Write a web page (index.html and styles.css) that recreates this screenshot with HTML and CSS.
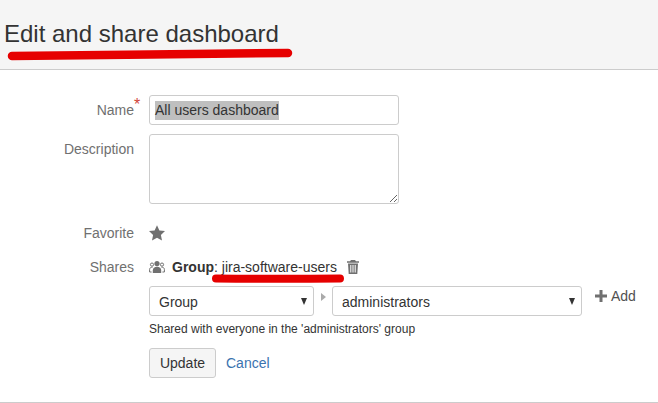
FILE: index.html
```html
<!DOCTYPE html>
<html lang="en">
<head>
<meta charset="utf-8">
<title>Edit and share dashboard</title>
<link rel="stylesheet" href="styles.css">
</head>
<body>
<header class="page-header"><h1>Edit and share dashboard</h1></header>
<form class="form">
  <div class="row row-name">
    <span class="label">Name<sup class="req">*</sup></span>
    <div class="input"><span class="selected">All users dashboard</span></div>
  </div>
  <div class="row row-desc">
    <label class="label" for="desc">Description</label>
    <textarea class="textarea" id="desc"></textarea>
  </div>
  <div class="row row-fav">
    <span class="label">Favorite</span>
    <svg class="star" viewBox="0 0 16 16" width="16" height="16"><path d="M8 .3l2.4 5.1 5.6.7-4.1 3.8 1.1 5.5L8 12.7l-5 2.7 1.1-5.5L0 6.1l5.6-.7z"/></svg>
  </div>
  <div class="row row-shares">
    <span class="label">Shares</span>
    <div class="shares">
      <div class="share-line">
        <svg class="group-icon" viewBox="0 0 16 14" width="16" height="14"><circle cx="8" cy="3.6" r="2.6" fill="#707070"/><path d="M3.8 13v-2.5C3.8 8 5.5 6.8 8 6.8s4.2 1.2 4.2 3.7V13z" fill="#707070"/><circle cx="3" cy="4.6" r="1.6" fill="none" stroke="#707070"/><circle cx="13" cy="4.6" r="1.6" fill="none" stroke="#707070"/><path d="M2.6 12H.6V9.6C.6 8 1.6 7.2 3.6 7.2M13.4 12h2V9.6c0-1.6-1-2.4-3-2.4" fill="none" stroke="#707070"/></svg>
        <span class="share-text"><b>Group</b>: jira-software-users</span>
        <svg class="trash" viewBox="0 0 12 14" width="12" height="14"><path d="M4 0h4l1 1.3h3v1.5H0V1.3h3zM1 3.6h10L10.300 14H1.700zM3.300 5v7.500h1V5zM5.500 5v7.500h1V5zM7.700 5v7.500h1V5z" fill-rule="evenodd"/></svg>
      </div>
      <div class="select-line">
        <div class="select select-type"><span>Group</span><i class="arrow"></i></div>
        <i class="sep"></i>
        <div class="select select-group"><span>administrators</span><i class="arrow"></i></div>
        <a class="add"><svg viewBox="0 0 12 12" width="12" height="12"><path d="M4.500 0h3v4.500H12v3H7.500V12h-3V7.500H0v-3h4.500z"/></svg>Add</a>
      </div>
      <div class="help">Shared with everyone in the 'administrators' group</div>
      <div class="actions">
        <button class="btn" type="button">Update</button>
        <a class="cancel">Cancel</a>
      </div>
    </div>
  </div>
</form>
<div class="marks">
  <svg width="658" height="403" viewBox="0 0 658 403">
    <path d="M12 56C100 55 200 54 288 53" fill="none" stroke="#e60000" stroke-width="8.500" stroke-linecap="round"/>
    <path d="M216 278.500C260 279 300 279 340 278.500" fill="none" stroke="#e60000" stroke-width="8" stroke-linecap="round"/>
  </svg>
</div>
</body>
</html>
```
FILE: styles.css
```css
* { box-sizing: border-box; }
html, body { margin: 0; height: 403px; overflow: hidden; }
body {
  position: relative;
  background: #fff;
  color: #333;
  font: 14px/20px "Liberation Sans", Arial, sans-serif;
  border-bottom: 1px solid #ccc;
}
.page-header {
  height: 70px;
  background: #f5f5f5;
  border-bottom: 1px solid #ccc;
  padding: 20px 0 0 4px;
}
.page-header h1 {
  margin: 0;
  font-size: 24px;
  line-height: 28px;
  font-weight: 400;
}
.form { padding-top: 25px; }
.row { display: flex; align-items: flex-start; gap: 15px; }
.label {
  flex: none;
  width: 134px;
  text-align: right;
  color: #707070;
  position: relative;
}
.req {
  position: absolute;
  top: 2px;
  color: #d04437;
  font-size: 16px;
  line-height: 16px;
}
.row-name .label { padding-top: 5px; }
.row-desc { margin-top: 9px; }
.row-desc .label { padding-top: 5px; }
.row-fav { margin-top: 19px; align-items: center; }
.row-shares { margin-top: 14px; }
.input, .textarea {
  width: 250px;
  border: 1px solid #ccc;
  border-radius: 3px;
  background: #fff;
  color: #333;
  font: inherit;
  outline: none;
}
.input { height: 30px; padding: 4px 5px 0 5px; }
.selected { background: #bfbfbf; display: inline-block; height: 19px; line-height: 19px; }
.textarea { height: 70px; padding: 5px 6px; display: block; }
.star { fill: #707070; display: block; }
.shares { width: 500px; }
.share-line { display: flex; align-items: center; height: 20px; }
.group-icon { flex: none; }
.share-text { margin-left: 7px; }
.share-text b { font-weight: 700; }
.trash { flex: none; margin-left: 10px; fill: #707070; }
.select-line { display: flex; align-items: flex-start; margin-top: 9px; }
.select {
  height: 30px;
  border: 1px solid #ccc;
  border-radius: 3px;
  background: #fff;
  display: flex;
  align-items: center;
  justify-content: space-between;
  padding: 2px 6px 0 9px;
}
.select-type { width: 165px; }
.select-group { width: 250px; }
.arrow {
  width: 0; height: 0;
  margin-top: -2px;
  border-left: 3.500px solid transparent;
  border-right: 3.500px solid transparent;
  border-top: 7px solid #333;
}
.sep {
  flex: none;
  width: 0; height: 0;
  margin: 7px 6px 0 7px;
  border-top: 4px solid transparent;
  border-bottom: 4px solid transparent;
  border-left: 5px solid #aaa;
}
.add {
  display: flex;
  align-items: center;
  gap: 4px;
  margin-left: 13px;
  color: #505050;
  height: 20px;
}
.add svg { fill: #707070; }
.help { font-size: 12px; line-height: 16px; margin-top: 5px; }
.actions { display: flex; align-items: center; gap: 10px; margin-top: 11px; }
.btn {
  width: 67px;
  height: 30px;
  border: 1px solid #ccc;
  border-radius: 3px;
  background: #f5f5f5;
  color: #333;
  font: inherit;
  padding: 0;
}
.cancel { color: #3b73af; }
.marks { position: absolute; inset: 0; pointer-events: none; }
.marks svg { display: block; }
```
